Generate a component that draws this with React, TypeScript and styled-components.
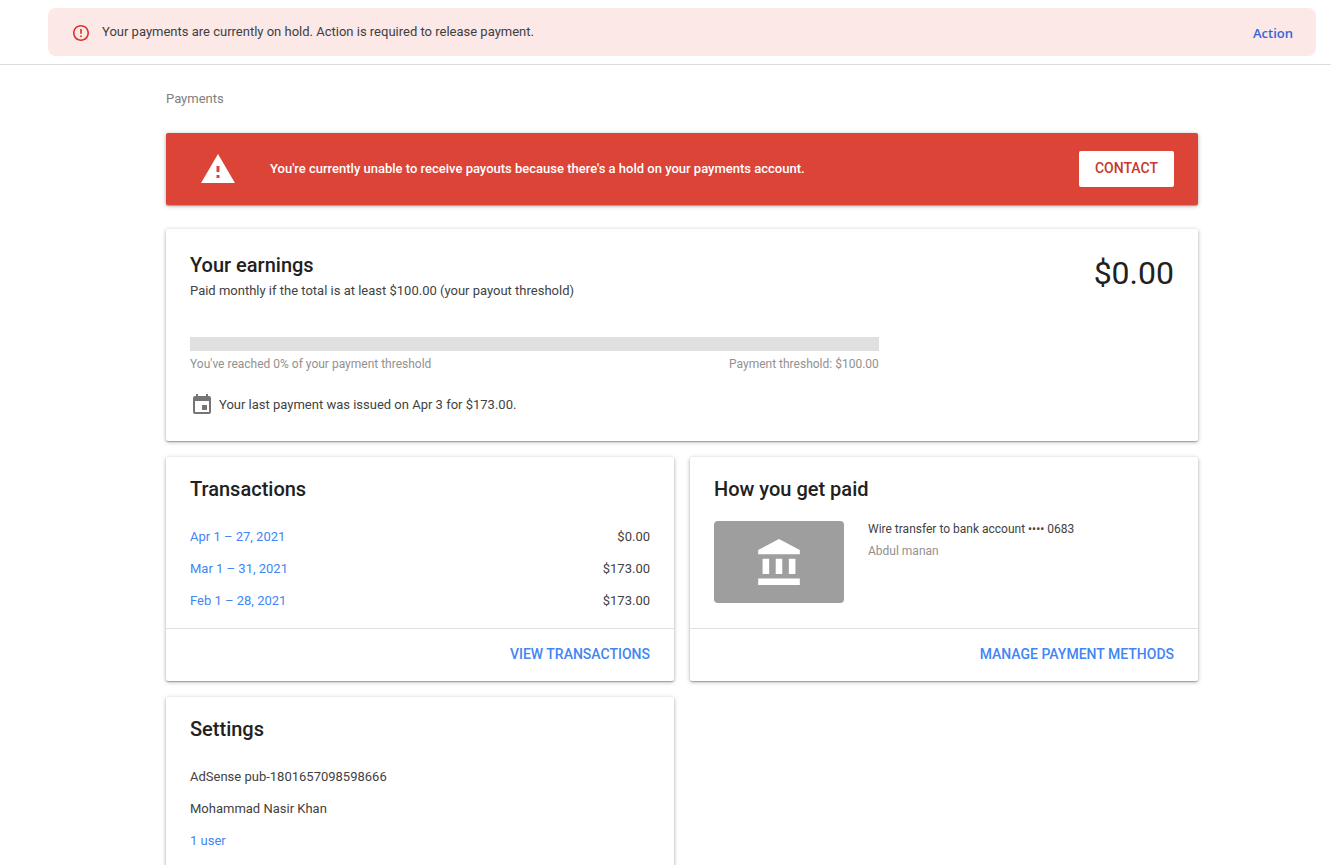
import React from 'react';
import styled, { createGlobalStyle } from 'styled-components';

const GlobalStyle = createGlobalStyle`
  *, *::before, *::after { box-sizing: border-box; }
  body {
    margin: 0;
    background: #fff;
    color: #424242;
    font-family: Roboto, "Liberation Sans", sans-serif;
    font-size: 13px;
    line-height: 20px;
  }
  h1, h2, p, ul { margin: 0; padding: 0; font-weight: 400; }
  ul { list-style: none; }
`;

const TopBar = styled.header`
  padding: 8px 15px 8px 48px;
  border-bottom: 1px solid #dadce0;
`;

const Notice = styled.div`
  display: flex;
  align-items: center;
  min-height: 48px;
  padding: 0 23px;
  border-radius: 8px;
  background: #fce8e6;
  svg { flex: none; margin: 2px 13px 0 2px; fill: #d93025; }
`;

const NoticeText = styled.p`
  flex: 1;
  color: #3c4043;
`;

const NoticeLink = styled.a`
  padding-top: 2px;
  color: #3367d6;
  font-family: "Open Sans", Roboto, sans-serif;
  font-size: 13px;
  font-weight: 600;
  text-decoration: none;
`;

const Main = styled.main`
  padding: 24px 15px 24px 48px;
`;

const Content = styled.div`
  max-width: 1032px;
  margin: 0 auto;
`;

const PageTitle = styled.h1`
  margin-bottom: 24px;
  color: #808080;
  font-size: 13px;
  line-height: 20px;
`;

const Card = styled.section`
  display: flex;
  flex-direction: column;
  border-radius: 2px;
  background: #fff;
  box-shadow: 0 1px 4px rgba(0, 0, 0, 0.3), 0 1px 1px rgba(0, 0, 0, 0.24);
`;

const Alert = styled(Card)`
  flex-direction: row;
  align-items: center;
  margin-bottom: 24px;
  padding: 18px 24px 18px 34px;
  background: #db4437;
  color: #fff;
  svg { flex: none; margin-right: 34px; fill: #fff; }
`;

const AlertText = styled.p`
  flex: 1;
  font-weight: 500;
`;

const ContactButton = styled.button`
  height: 36px;
  padding: 0 16px 2px;
  border: 0;
  border-radius: 2px;
  background: #fff;
  color: #c53929;
  font: 500 14px/20px Roboto, sans-serif;
  text-transform: uppercase;
  cursor: pointer;
`;

const CardBody = styled.div`
  flex: 1;
  padding: 20px 24px 11px;
`;

const EarningsBody = styled(CardBody)`
  padding: 24px;
`;

const CardTitle = styled.h2`
  color: #212121;
  font-size: 20px;
  font-weight: 500;
  line-height: 24px;
`;

const EarningsHead = styled.div`
  display: flex;
  justify-content: space-between;
`;

const Subtitle = styled.p`
  margin-top: 4px;
`;

const Balance = styled.div`
  color: #212121;
  font-size: 32px;
  line-height: 40px;
`;

const Threshold = styled.div`
  width: 70%;
  margin-top: 36px;
`;

const Track = styled.div`
  height: 14px;
  background: #e0e0e0;
`;

const TrackFill = styled.div`
  height: 100%;
  background: #4285f4;
`;

const TrackLabels = styled.div`
  display: flex;
  justify-content: space-between;
  margin-top: 4px;
  color: #919191;
  font-size: 12px;
  line-height: 18px;
`;

const LastPayment = styled.div`
  display: flex;
  align-items: center;
  gap: 5px;
  margin-top: 20px;
  svg { flex: none; fill: #757575; }
`;

const Grid = styled.div`
  display: grid;
  grid-template-columns: 1fr 1fr;
  gap: 16px;
  margin-top: 16px;
`;

const Transactions = styled.table`
  width: 100%;
  margin-top: 20px;
  border-collapse: collapse;
  th, td { height: 32px; padding: 0; font-weight: 400; }
  th { text-align: left; }
  td { text-align: right; }
`;

const TextLink = styled.a`
  color: #4285f4;
  text-decoration: none;
`;

const CardFooter = styled.div`
  display: flex;
  justify-content: flex-end;
  padding: 15px 24px 17px;
  border-top: 1px solid #e0e0e0;
`;

const ActionLink = styled.a`
  color: #4285f4;
  font-size: 14px;
  font-weight: 500;
  line-height: 20px;
  text-decoration: none;
  text-transform: uppercase;
`;

const Method = styled.div`
  display: flex;
  gap: 24px;
  margin-top: 20px;
  font-size: 12px;
`;

const BankTile = styled.div`
  display: flex;
  align-items: center;
  justify-content: center;
  width: 130px;
  height: 82px;
  border-radius: 4px;
  background: #9e9e9e;
  svg { fill: #fff; }
`;

const MethodText = styled.div`
  display: grid;
  align-content: start;
  gap: 6px;
  line-height: 16px;
`;

const Holder = styled.p`
  color: #919191;
`;

const SettingsList = styled.ul`
  margin-top: 20px;
  line-height: 32px;
`;

const rows = [
  { period: 'Apr 1 – 27, 2021', amount: '$0.00' },
  { period: 'Mar 1 – 31, 2021', amount: '$173.00' },
  { period: 'Feb 1 – 28, 2021', amount: '$173.00' },
];

const reached = 0;

export default function App() {
  return (
    <>
      <GlobalStyle />
      <TopBar>
        <Notice role="status">
          <svg width="16" height="16" viewBox="2 2 20 20" aria-hidden="true">
            <path d="M11 15h2v2h-2zm0-8h2v6h-2zm.99-5C6.47 2 2 6.48 2 12s4.47 10 9.99 10C17.52 22 22 17.52 22 12S17.52 2 11.99 2zM12 20c-4.42 0-8-3.58-8-8s3.58-8 8-8 8 3.58 8 8-3.58 8-8 8z" />
          </svg>
          <NoticeText>Your payments are currently on hold. Action is required to release payment.</NoticeText>
          <NoticeLink href="#action">Action</NoticeLink>
        </Notice>
      </TopBar>
      <Main>
        <Content>
          <PageTitle>Payments</PageTitle>
          <Alert role="alert">
            <svg width="36" height="36" viewBox="0 0 24 24" aria-hidden="true">
              <path d="M.7 21.300h22.600L12 2 .7 21.300zM13 18h-2v-2h2v2zm0-4h-2v-4h2v4z" />
            </svg>
            <AlertText>
              You're currently unable to receive payouts because there's a hold on your payments account.
            </AlertText>
            <ContactButton type="button">Contact</ContactButton>
          </Alert>

          <Card>
            <EarningsBody>
              <EarningsHead>
                <div>
                  <CardTitle>Your earnings</CardTitle>
                  <Subtitle>Paid monthly if the total is at least $100.00 (your payout threshold)</Subtitle>
                </div>
                <Balance>$0.00</Balance>
              </EarningsHead>
              <Threshold>
                <Track
                  role="progressbar"
                  aria-label="Payment threshold"
                  aria-valuemin={0}
                  aria-valuemax={100}
                  aria-valuenow={reached}
                >
                  <TrackFill style={{ width: `${reached}%` }} />
                </Track>
                <TrackLabels>
                  <span>You've reached 0% of your payment threshold</span>
                  <span>Payment threshold: $100.00</span>
                </TrackLabels>
              </Threshold>
              <LastPayment>
                <svg width="24" height="24" viewBox="0 0 24 24" aria-hidden="true">
                  <path d="M17 12h-5v5h5v-5zM16 1v2H8V1H6v2H5c-1.11 0-1.99.9-1.99 2L3 19c0 1.1.89 2 2 2h14c1.1 0 2-.9 2-2V5c0-1.1-.9-2-2-2h-1V1h-2zm3 18H5V8h14v11z" />
                </svg>
                <p>Your last payment was issued on Apr 3 for $173.00.</p>
              </LastPayment>
            </EarningsBody>
          </Card>

          <Grid>
            <Card>
              <CardBody>
                <CardTitle>Transactions</CardTitle>
                <Transactions>
                  <tbody>
                    {rows.map((row) => (
                      <tr key={row.period}>
                        <th scope="row">
                          <TextLink href="#transactions">{row.period}</TextLink>
                        </th>
                        <td>{row.amount}</td>
                      </tr>
                    ))}
                  </tbody>
                </Transactions>
              </CardBody>
              <CardFooter>
                <ActionLink href="#transactions">View transactions</ActionLink>
              </CardFooter>
            </Card>

            <Card>
              <CardBody>
                <CardTitle>How you get paid</CardTitle>
                <Method>
                  <BankTile>
                    <svg width="42" height="46" viewBox="2 1 19 21" aria-hidden="true">
                      <path d="M4 10v7h3v-7H4zm6 0v7h3v-7h-3zM2 22h19v-3H2v3zm14-12v7h3v-7h-3zm-4.500-9L2 6v2h19V6l-9.500-5z" />
                    </svg>
                  </BankTile>
                  <MethodText>
                    <p>Wire transfer to bank account •••• 0683</p>
                    <Holder>Abdul manan</Holder>
                  </MethodText>
                </Method>
              </CardBody>
              <CardFooter>
                <ActionLink href="#methods">Manage payment methods</ActionLink>
              </CardFooter>
            </Card>

            <Card>
              <CardBody>
                <CardTitle>Settings</CardTitle>
                <SettingsList>
                  <li>AdSense pub-1801657098598666</li>
                  <li>Mohammad Nasir Khan</li>
                  <li>
                    <TextLink href="#users">1 user</TextLink>
                  </li>
                </SettingsList>
              </CardBody>
            </Card>
          </Grid>
        </Content>
      </Main>
    </>
  );
}
